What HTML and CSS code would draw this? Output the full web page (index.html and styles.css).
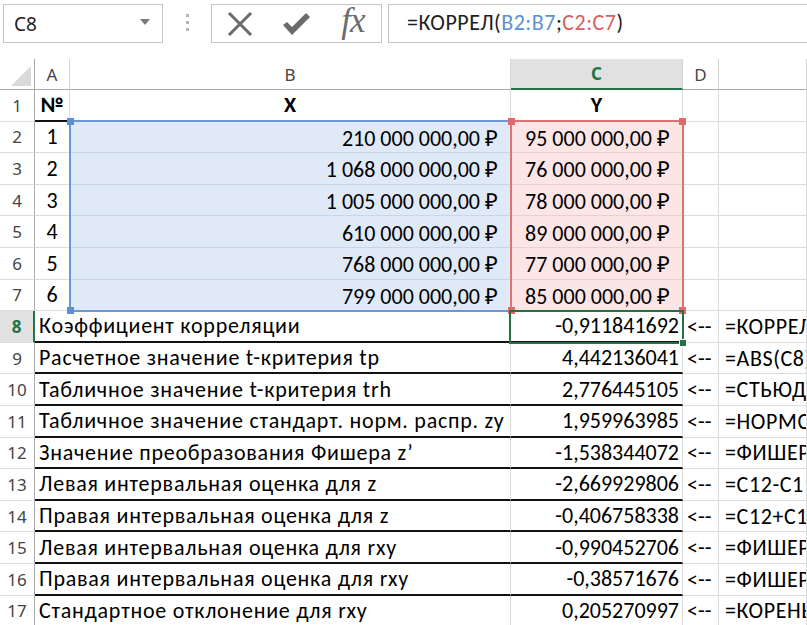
FILE: index.html
```html
<!DOCTYPE html>
<html lang="ru">
<head>
<meta charset="utf-8">
<link rel="stylesheet" href="styles.css">
</head>
<body>
<div class="toolbar">
  <div class="namebox"><span>C8</span><span class="caret"></span></div>
  <div class="grip"><i></i><i></i><i></i></div>
  <div class="btns">
    <div class="btn"><svg width="26" height="24" viewBox="0 0 26 24"><path d="M2 1 L24 23 M24 1 L2 23" stroke="#6b6b6b" stroke-width="3" fill="none"/></svg></div>
    <div class="btn"><svg width="30" height="24" viewBox="0 0 30 24"><path d="M2 13 L6 10 L11 15 L25 1 L29 5 L11 23 Z" fill="#6b6b6b"/></svg></div>
    <div class="btn fx">fx</div>
  </div>
  <div class="formula">=КОРРЕЛ(<span class="rb">B2:B7</span>;<span class="rc">C2:C7</span>)</div>
</div>

<div class="sheet">
  <div class="h corner"><svg width="20" height="20" viewBox="0 0 20 20"><polygon points="20,0 20,20 0,20" fill="#d9d9d9"/></svg></div>
  <div class="h">A</div>
  <div class="h">B</div>
  <div class="h sel">C</div>
  <div class="h">D</div>
  <div class="h"></div>

  <div class="rh">1</div>
  <div class="c ctr b bb">№</div>
  <div class="c ctr b bb">X</div>
  <div class="c ctr b bb">Y</div>
  <div class="c"></div>
  <div class="c"></div>

  <div class="rh">2</div>
  <div class="c ctr">1</div>
  <div class="c r money blue">210 000 000,00 ₽</div>
  <div class="c r money red">95 000 000,00 ₽</div>
  <div class="c"></div>
  <div class="c"></div>

  <div class="rh">3</div>
  <div class="c ctr">2</div>
  <div class="c r money blue">1 068 000 000,00 ₽</div>
  <div class="c r money red">76 000 000,00 ₽</div>
  <div class="c"></div>
  <div class="c"></div>

  <div class="rh">4</div>
  <div class="c ctr">3</div>
  <div class="c r money blue">1 005 000 000,00 ₽</div>
  <div class="c r money red">78 000 000,00 ₽</div>
  <div class="c"></div>
  <div class="c"></div>

  <div class="rh">5</div>
  <div class="c ctr">4</div>
  <div class="c r money blue">610 000 000,00 ₽</div>
  <div class="c r money red">89 000 000,00 ₽</div>
  <div class="c"></div>
  <div class="c"></div>

  <div class="rh">6</div>
  <div class="c ctr">5</div>
  <div class="c r money blue">768 000 000,00 ₽</div>
  <div class="c r money red">77 000 000,00 ₽</div>
  <div class="c"></div>
  <div class="c"></div>

  <div class="rh">7</div>
  <div class="c ctr">6</div>
  <div class="c r money blue">799 000 000,00 ₽</div>
  <div class="c r money red">85 000 000,00 ₽</div>
  <div class="c"></div>
  <div class="c"></div>

  <div class="rh sel">8</div>
  <div class="c lab bb">Коэффициент корреляции</div>
  <div class="c r bb">-0,911841692</div>
  <div class="c arr">&lt;--</div>
  <div class="c f">=КОРРЕЛ(B2:B7;C2:C7)</div>

  <div class="rh">9</div>
  <div class="c lab bb">Расчетное значение t-критерия tр</div>
  <div class="c r bb">4,442136041</div>
  <div class="c arr">&lt;--</div>
  <div class="c f">=ABS(C8)*КОРЕНЬ(4/(1-C8^2))</div>

  <div class="rh">10</div>
  <div class="c lab bb">Табличное значение t-критерия trh</div>
  <div class="c r bb">2,776445105</div>
  <div class="c arr">&lt;--</div>
  <div class="c f">=СТЬЮДЕНТ.ОБР.2Х(0,05;4)</div>

  <div class="rh">11</div>
  <div class="c lab bb">Табличное значение стандарт. норм. распр. zy</div>
  <div class="c r bb">1,959963985</div>
  <div class="c arr">&lt;--</div>
  <div class="c f">=НОРМСТОБР(0,975)</div>

  <div class="rh">12</div>
  <div class="c lab bb">Значение преобразования Фишера z’</div>
  <div class="c r bb">-1,538344072</div>
  <div class="c arr">&lt;--</div>
  <div class="c f">=ФИШЕР(C8)</div>

  <div class="rh">13</div>
  <div class="c lab bb">Левая интервальная оценка для z</div>
  <div class="c r bb">-2,669929806</div>
  <div class="c arr">&lt;--</div>
  <div class="c f">=C12-C11*КОРЕНЬ(1/3)</div>

  <div class="rh">14</div>
  <div class="c lab bb">Правая интервальная оценка для z</div>
  <div class="c r bb">-0,406758338</div>
  <div class="c arr">&lt;--</div>
  <div class="c f">=C12+C11*КОРЕНЬ(1/3)</div>

  <div class="rh">15</div>
  <div class="c lab bb">Левая интервальная оценка для rxy</div>
  <div class="c r bb">-0,990452706</div>
  <div class="c arr">&lt;--</div>
  <div class="c f">=ФИШЕРОБР(C13)</div>

  <div class="rh">16</div>
  <div class="c lab bb">Правая интервальная оценка для rxy</div>
  <div class="c r bb">-0,38571676</div>
  <div class="c arr">&lt;--</div>
  <div class="c f">=ФИШЕРОБР(C14)</div>

  <div class="rh">17</div>
  <div class="c lab bb">Стандартное отклонение для rxy</div>
  <div class="c r bb">0,205270997</div>
  <div class="c arr">&lt;--</div>
  <div class="c f">=КОРЕНЬ((1-C8^2)/4)</div>

  <div class="range rng-blue"><i class="hd tl"></i><i class="hd bl"></i></div>
  <div class="range rng-red"><i class="hd tl"></i><i class="hd tr"></i><i class="hd bl"></i><i class="hd br"></i></div>
  <div class="active"><i class="fill"></i></div>
</div>
</body>
</html>
```

FILE: styles.css
```css
* { box-sizing: border-box; }
html, body { margin: 0; padding: 0; background: #fff; }
body {
  width: 807px;
  height: 625px;
  overflow: hidden;
  font-family: Carlito, "Open Sans", sans-serif;
  color: #000;
}

/* formula bar */
.toolbar {
  display: flex;
  align-items: flex-start;
  height: 59px;
  padding-top: 4px;
}
.namebox {
  margin-left: 3px;
  width: 160px;
  height: 39px;
  border: 1px solid #c6c6c6;
  display: flex;
  align-items: center;
  justify-content: space-between;
  padding: 0 12px 0 10px;
  font-family: "Noto Sans", sans-serif;
  font-size: 19px;
  color: #222;
}
.caret {
  width: 0;
  height: 0;
  border-left: 5px solid transparent;
  border-right: 5px solid transparent;
  border-top: 6px solid #7a7a7a;
  margin-top: -4px;
}
.grip {
  width: 48px;
  display: flex;
  flex-direction: column;
  align-items: center;
  gap: 4px;
  padding-top: 10px;
}
.grip i {
  display: block;
  width: 3px;
  height: 3px;
  background: #b5b5b5;
}
.btns {
  width: 171px;
  height: 39px;
  border: 1px solid #c6c6c6;
  display: flex;
}
.btn {
  width: 57px;
  display: flex;
  align-items: center;
  justify-content: center;
}
.fx {
  font-family: "Liberation Serif", serif;
  font-style: italic;
  font-size: 35px;
  color: #6b6b6b;
  padding-bottom: 5px;
  letter-spacing: -1px;
}
.formula {
  margin-left: 6px;
  flex: 1;
  height: 39px;
  border: 1px solid #c6c6c6;
  border-right: none;
  padding-left: 18px;
  font-size: 22px;
  letter-spacing: 0.5px;
  line-height: 36px;
  color: #1e1e1e;
  white-space: nowrap;
}
.rb { color: #5b8fd6; }
.rc { color: #d95f5f; }

/* sheet */
.sheet {
  position: relative;
  display: grid;
  grid-template-columns: 35px 35px 441px 172px 36px 88px;
  grid-template-rows: 31px repeat(17, 31.6px);
}
.h {
  display: flex;
  align-items: center;
  justify-content: center;
  font-family: "Noto Sans", sans-serif;
  font-size: 17px;
  color: #444;
  border-right: 1px solid #d4d4d4;
  border-bottom: 1px solid #ababab;
}
.h.corner {
  align-items: flex-end;
  justify-content: flex-end;
  padding: 0 3px 3px 0;
  border-right: 1px solid #ababab;
}
.h.sel {
  background: #e1e1e1;
  color: #217346;
  font-weight: bold;
  border-bottom: 2px solid #217346;
}
.rh {
  display: flex;
  align-items: center;
  justify-content: center;
  font-family: "Noto Sans", sans-serif;
  font-size: 17px;
  color: #444;
  border-right: 1px solid #ababab;
  border-bottom: 1px solid #dcdcdc;
}
.rh.sel {
  background: #e1e1e1;
  color: #217346;
  font-weight: bold;
  border-right: 2px solid #217346;
}
.c {
  display: flex;
  align-items: center;
  padding: 0 4px;
  white-space: nowrap;
  font-size: 22px;
  border-right: 1px solid #dadcdd;
  border-bottom: 1px solid #dadcdd;
}
.ctr { justify-content: center; }
.r { justify-content: flex-end; padding-right: 3px; }
.r.money { padding-right: 12px; }
.b { font-weight: bold; }
.bb { border-bottom: 2px solid #111; }
.blue { background: #dfe9f7; border-bottom-color: #c9d6ea; }
.red { background: #fbe5e5; border-bottom-color: #ecd0d0; }
.lab { grid-column: span 2; letter-spacing: 0.75px; }
.arr { padding-left: 4px; }
.f { padding-left: 6px; overflow: hidden; letter-spacing: 0.6px; }

/* overlays */
.range {
  position: absolute;
  top: 61px;
  height: 192px;
}
.rng-blue {
  left: 69px;
  width: 443px;
  border: 2px solid #6b97d8;
}
.rng-red {
  left: 510px;
  width: 174px;
  border: 2px solid #e07272;
}
.hd {
  position: absolute;
  width: 7px;
  height: 7px;
}
.rng-blue .hd { background: #5b8fd6; }
.rng-red .hd { background: #e06a6a; }
.hd.tl { left: -4px; top: -4px; }
.hd.tr { right: -4px; top: -4px; }
.hd.bl { left: -4px; bottom: -4px; }
.hd.br { right: -4px; bottom: -4px; }
.active {
  position: absolute;
  left: 509px;
  top: 251px;
  width: 175px;
  height: 34px;
  border: 2px solid #217346;
}
.fill {
  position: absolute;
  right: -5px;
  bottom: -5px;
  width: 8px;
  height: 8px;
  background: #217346;
  border: 1px solid #fff;
}
```
